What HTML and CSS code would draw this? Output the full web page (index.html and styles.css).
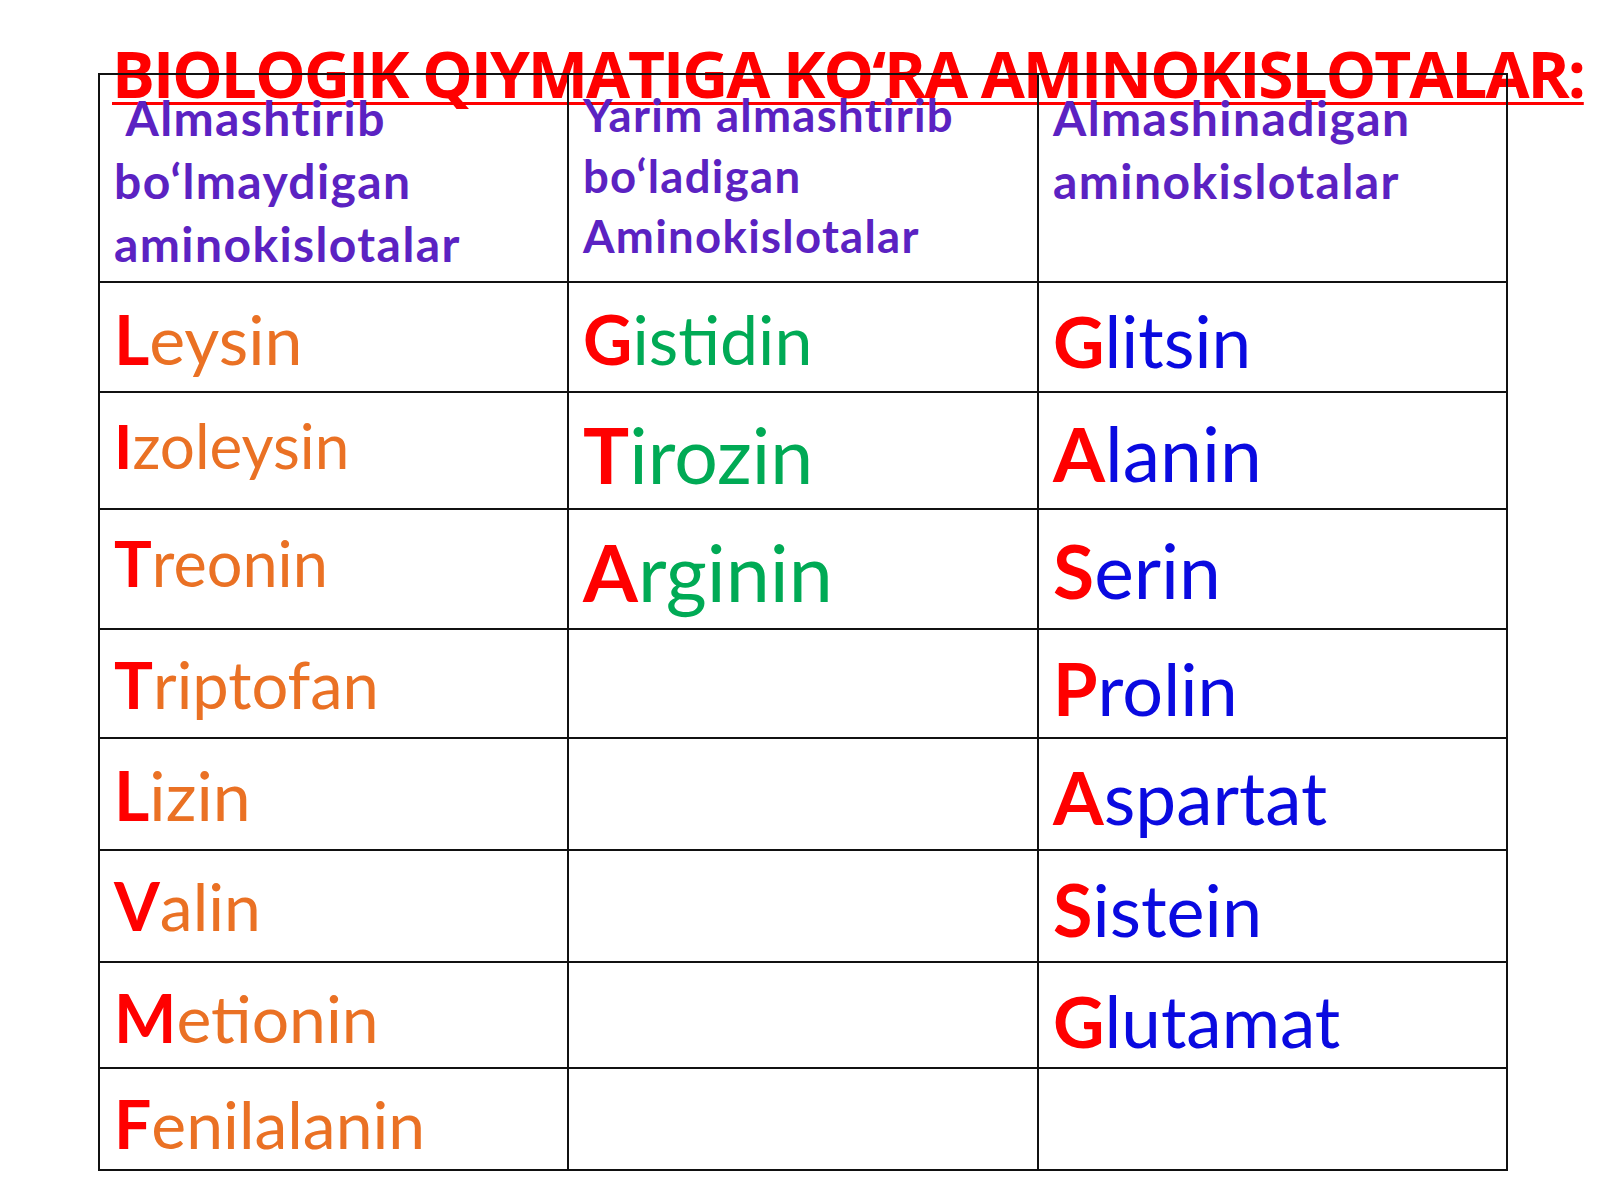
FILE: index.html
```html
<!DOCTYPE html>
<html lang="uz">
<head>
<meta charset="utf-8">
<title>Biologik qiymatiga ko‘ra aminokislotalar</title>
<link rel="stylesheet" href="styles.css">
</head>
<body>
<div class="slide">
  <h1 class="title">BIOLOGIK QIYMATIGA KO‘RA AMINOKISLOTALAR:</h1>
  <div class="grid">
    <div class="cell head h1">&nbsp;Almashtirib<br>bo‘lmaydigan<br>aminokislotalar</div>
    <div class="cell head h2">Yarim almashtirib<br>bo‘ladigan<br>Aminokislotalar</div>
    <div class="cell head h3">Almashinadigan<br>aminokislotalar</div>

    <div class="cell o s68"><b>L</b>eysin</div>
    <div class="cell g s68"><b>G</b>istidin</div>
    <div class="cell bl s71"><b>G</b>litsin</div>

    <div class="cell o s62"><b>I</b>zoleysin</div>
    <div class="cell g s77"><b>T</b>irozin</div>
    <div class="cell bl s75"><b>A</b>lanin</div>

    <div class="cell o s63"><b>T</b>reonin</div>
    <div class="cell g s79"><b>A</b>rginin</div>
    <div class="cell bl s75"><b>S</b>erin</div>

    <div class="cell o s65"><b>T</b>riptofan</div>
    <div class="cell"></div>
    <div class="cell bl s72"><b>P</b>rolin</div>

    <div class="cell o s68"><b>L</b>izin</div>
    <div class="cell"></div>
    <div class="cell bl s73"><b>A</b>spartat</div>

    <div class="cell o s66"><b>V</b>alin</div>
    <div class="cell"></div>
    <div class="cell bl s72"><b>S</b>istein</div>

    <div class="cell o s66"><b>M</b>etionin</div>
    <div class="cell"></div>
    <div class="cell bl s71"><b>G</b>lutamat</div>

    <div class="cell o s66"><b>F</b>enilalanin</div>
    <div class="cell"></div>
    <div class="cell"></div>
  </div>
</div>
</body>
</html>
```
FILE: styles.css
```css
html, body {
  margin: 0;
  padding: 0;
  background: #ffffff;
}

.slide {
  position: relative;
  width: 1600px;
  height: 1200px;
  overflow: hidden;
  padding-top: 73px;
  padding-left: 98px;
  box-sizing: border-box;
  font-family: Lato, "Liberation Sans", sans-serif;
}

.title {
  position: absolute;
  left: 112px;
  top: 42px;
  margin: 0;
  font-family: "Open Sans", "Liberation Sans", sans-serif;
  font-weight: 700;
  font-size: 64px;
  letter-spacing: -2.1px;
  line-height: 1;
  color: #ff0000;
  white-space: nowrap;
  text-decoration: underline;
  text-decoration-thickness: 3px;
  text-underline-offset: 4px;
  text-decoration-skip-ink: none;
  z-index: 0;
}

.grid {
  position: relative;
  z-index: 1;
  display: grid;
  grid-template-columns: 469px 470px 469px;
  grid-template-rows: 208px 110px 117px 120px 109px 112px 112px 106px 102px;
  width: 1410px;
  border-left: 2px solid #111;
  border-top: 2px solid #111;
  box-sizing: border-box;
}

.cell {
  box-sizing: border-box;
  border-right: 2px solid #111;
  border-bottom: 2px solid #111;
  padding: 15px 6px 0 14px;
  line-height: 1.2;
  white-space: nowrap;
  background: transparent;
}

.cell b {
  color: #ff0000;
  font-weight: 700;
}

.head {
  font-weight: 700;
  font-size: 48px;
  letter-spacing: 1.4px;
  color: #5b22c2;
  line-height: 63px;
  padding-top: 11px;
}

.head.h2 {
  font-size: 45.5px;
  letter-spacing: 1.3px;
  line-height: 60.5px;
  padding-top: 10px;
}

.o { color: #ea7124; }
.g { color: #00aa55; }
.bl { color: #0a0ae0; }

.s62 { font-size: 62px; }
.s63 { font-size: 63px; }
.s65 { font-size: 65px; }
.s66 { font-size: 66px; }
.s68 { font-size: 68px; }
.s71 { font-size: 71px; }
.s72 { font-size: 72px; }
.s73 { font-size: 73px; }
.s75 { font-size: 75px; }
.s77 { font-size: 77px; }
.s79 { font-size: 79px; }
```
